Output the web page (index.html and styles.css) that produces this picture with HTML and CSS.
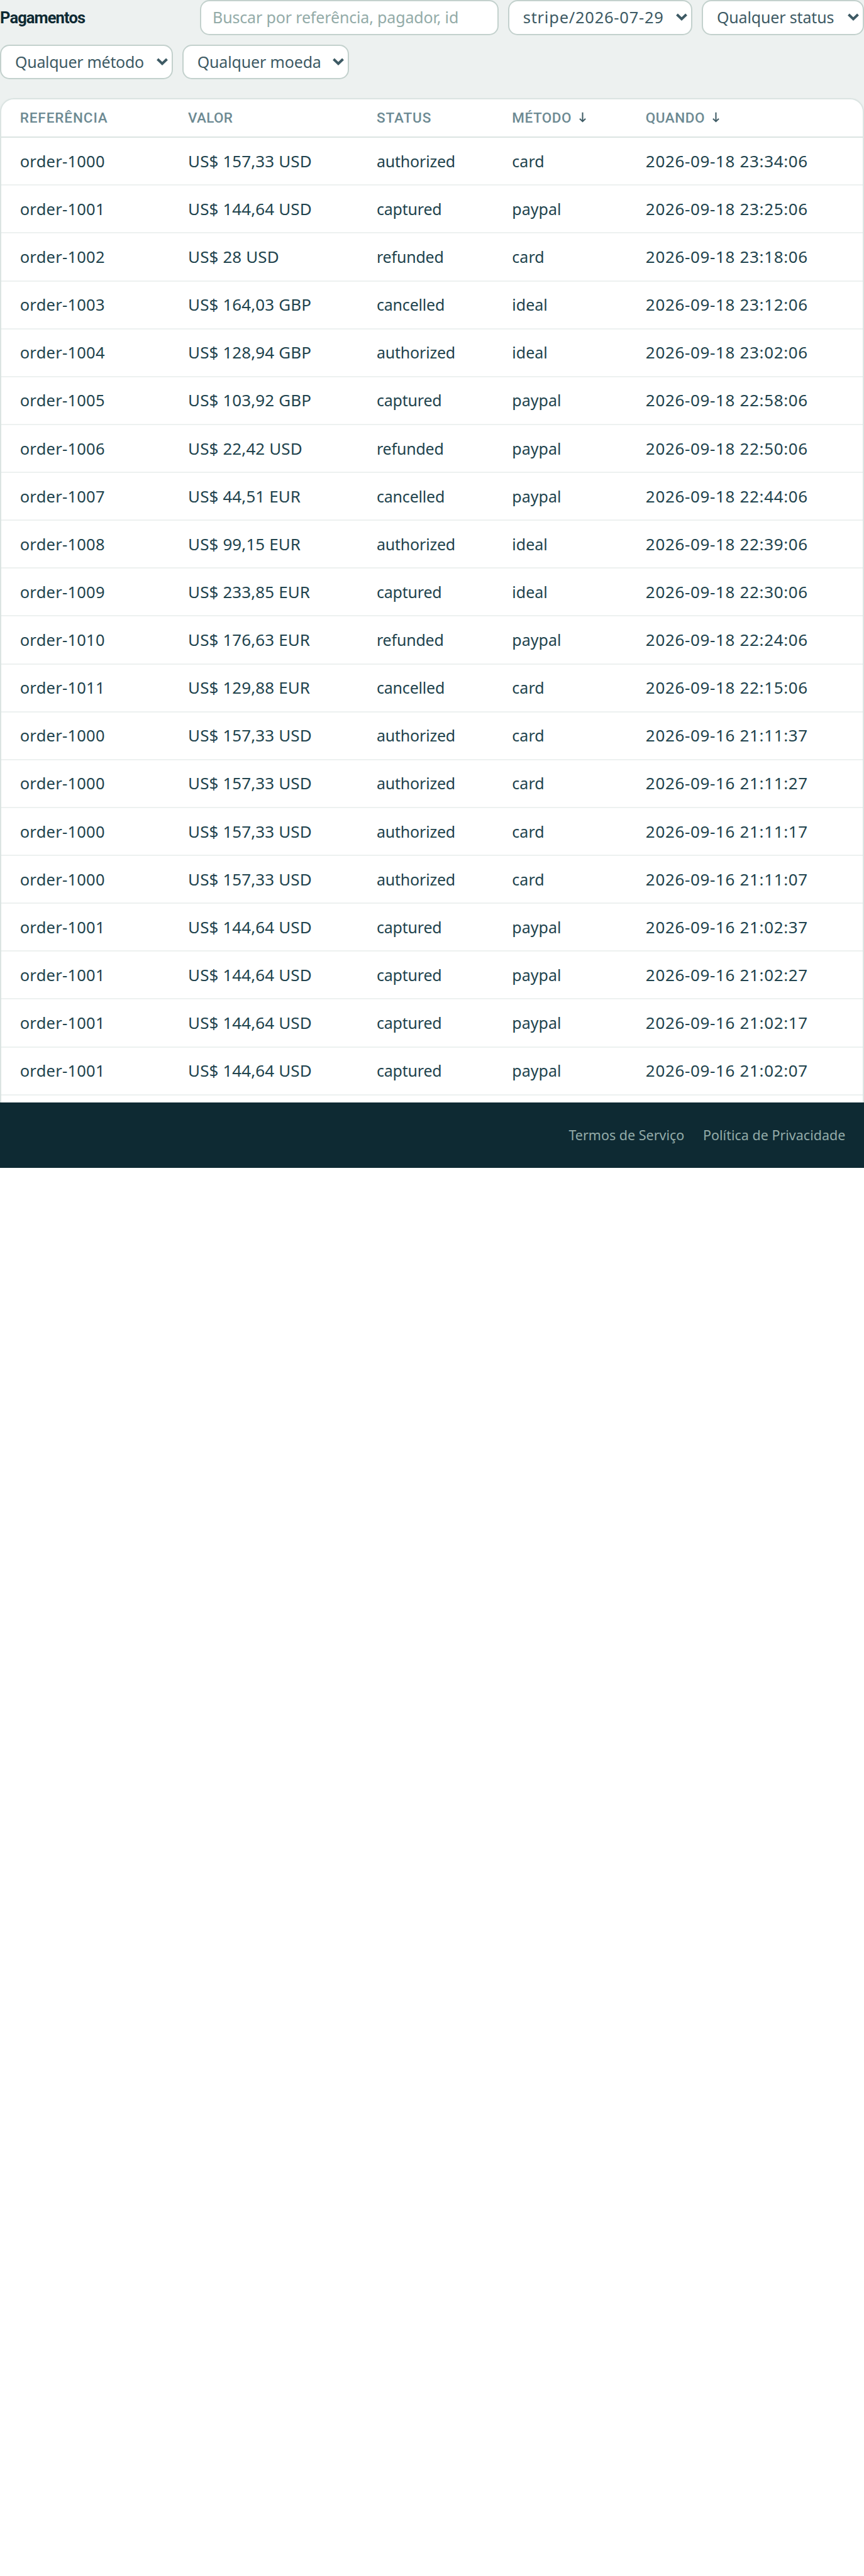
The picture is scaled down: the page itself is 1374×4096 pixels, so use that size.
FILE: index.html
```html
<!DOCTYPE html>
<html lang="pt-BR">
<head>
  <meta charset="UTF-8" />
  <meta name="viewport" content="width=device-width, initial-scale=1.0"/>
  <title>Pagamentos</title>
  <link rel="stylesheet" href="styles.css">
</head>
<body>

<main class="page">
  <div class="toolbar">
    <h1 class="title"><span>Pagamentos</span></h1>
    <div class="field search"><span>Buscar por referência, pagador, id</span></div>
    <div class="field select s-provider"><span>stripe/2026-07-29</span><svg class="chevron" viewBox="0 0 18 12"><path d="M1.5 2 9 9.2 16.500 2"/></svg></div>
    <div class="field select s-status"><span>Qualquer status</span><svg class="chevron" viewBox="0 0 18 12"><path d="M1.5 2 9 9.2 16.500 2"/></svg></div>
    <div class="field select s-method"><span>Qualquer método</span><svg class="chevron" viewBox="0 0 18 12"><path d="M1.5 2 9 9.2 16.500 2"/></svg></div>
    <div class="field select s-currency"><span>Qualquer moeda</span><svg class="chevron" viewBox="0 0 18 12"><path d="M1.5 2 9 9.2 16.500 2"/></svg></div>
  </div>

  <div class="card">
    <div class="row head">
      <div class="h-ref">Referência</div>
      <div class="h-val">Valor</div>
      <div class="h-sta">Status</div>
      <div class="h-met">Método<svg class="sort" viewBox="0 0 12 18"><path d="M6 0.500V16M1 11.500 6 16.300 11 11.500"/></svg></div>
      <div class="h-when">Quando<svg class="sort" viewBox="0 0 12 18"><path d="M6 0.500V16M1 11.500 6 16.300 11 11.500"/></svg></div>
    </div>
    <div class="row"><div class="ref">order-1000</div><div class="val">US$ 157,33 USD</div><div class="sta">authorized</div><div>card</div><div class="when">2026-09-18 23:34:06</div></div>
    <div class="row"><div class="ref">order-1001</div><div class="val">US$ 144,64 USD</div><div class="sta">captured</div><div>paypal</div><div class="when">2026-09-18 23:25:06</div></div>
    <div class="row"><div class="ref">order-1002</div><div class="val">US$ 28 USD</div><div class="sta">refunded</div><div>card</div><div class="when">2026-09-18 23:18:06</div></div>
    <div class="row"><div class="ref">order-1003</div><div class="val">US$ 164,03 GBP</div><div class="sta">cancelled</div><div>ideal</div><div class="when">2026-09-18 23:12:06</div></div>
    <div class="row"><div class="ref">order-1004</div><div class="val">US$ 128,94 GBP</div><div class="sta">authorized</div><div>ideal</div><div class="when">2026-09-18 23:02:06</div></div>
    <div class="row"><div class="ref">order-1005</div><div class="val">US$ 103,92 GBP</div><div class="sta">captured</div><div>paypal</div><div class="when">2026-09-18 22:58:06</div></div>
    <div class="row"><div class="ref">order-1006</div><div class="val">US$ 22,42 USD</div><div class="sta">refunded</div><div>paypal</div><div class="when">2026-09-18 22:50:06</div></div>
    <div class="row"><div class="ref">order-1007</div><div class="val">US$ 44,51 EUR</div><div class="sta">cancelled</div><div>paypal</div><div class="when">2026-09-18 22:44:06</div></div>
    <div class="row"><div class="ref">order-1008</div><div class="val">US$ 99,15 EUR</div><div class="sta">authorized</div><div>ideal</div><div class="when">2026-09-18 22:39:06</div></div>
    <div class="row"><div class="ref">order-1009</div><div class="val">US$ 233,85 EUR</div><div class="sta">captured</div><div>ideal</div><div class="when">2026-09-18 22:30:06</div></div>
    <div class="row"><div class="ref">order-1010</div><div class="val">US$ 176,63 EUR</div><div class="sta">refunded</div><div>paypal</div><div class="when">2026-09-18 22:24:06</div></div>
    <div class="row"><div class="ref">order-1011</div><div class="val">US$ 129,88 EUR</div><div class="sta">cancelled</div><div>card</div><div class="when">2026-09-18 22:15:06</div></div>
    <div class="row"><div class="ref">order-1000</div><div class="val">US$ 157,33 USD</div><div class="sta">authorized</div><div>card</div><div class="when">2026-09-16 21:11:37</div></div>
    <div class="row"><div class="ref">order-1000</div><div class="val">US$ 157,33 USD</div><div class="sta">authorized</div><div>card</div><div class="when">2026-09-16 21:11:27</div></div>
    <div class="row"><div class="ref">order-1000</div><div class="val">US$ 157,33 USD</div><div class="sta">authorized</div><div>card</div><div class="when">2026-09-16 21:11:17</div></div>
    <div class="row"><div class="ref">order-1000</div><div class="val">US$ 157,33 USD</div><div class="sta">authorized</div><div>card</div><div class="when">2026-09-16 21:11:07</div></div>
    <div class="row"><div class="ref">order-1001</div><div class="val">US$ 144,64 USD</div><div class="sta">captured</div><div>paypal</div><div class="when">2026-09-16 21:02:37</div></div>
    <div class="row"><div class="ref">order-1001</div><div class="val">US$ 144,64 USD</div><div class="sta">captured</div><div>paypal</div><div class="when">2026-09-16 21:02:27</div></div>
    <div class="row"><div class="ref">order-1001</div><div class="val">US$ 144,64 USD</div><div class="sta">captured</div><div>paypal</div><div class="when">2026-09-16 21:02:17</div></div>
    <div class="row"><div class="ref">order-1001</div><div class="val">US$ 144,64 USD</div><div class="sta">captured</div><div>paypal</div><div class="when">2026-09-16 21:02:07</div></div>
  </div>
</main>

<footer class="footer">
  <a class="terms">Termos de Serviço</a>
  <a class="privacy">Política de Privacidade</a>
</footer>

</body>
</html>
```
FILE: styles.css
```css
* {
  box-sizing: border-box;
}
body {
  margin: 0;
  background: #fff;
  font-family: "Noto Sans", sans-serif;
  font-size: 25px;
  color: #21434d;
}
.page {
  height: 1752.8px;
  overflow: hidden;
  background: #edf1f0;
}
.toolbar {
  display: flex;
  flex-wrap: wrap;
  gap: 14.85px;
  margin-bottom: 29.7px;
}
.title {
  width: 302.7px;
  height: 55.7px;
  margin: 0;
  font-family: Roboto, sans-serif;
  font-size: 25.5px;
  font-weight: 700;
  line-height: 56.5px;
  letter-spacing: -0.9px;
  color: #0e2a33;
}
.field {
  display: flex;
  align-items: center;
  height: 55.7px;
  padding-bottom: 2px;
  border: 2px solid #c3d1cd;
  border-radius: 15px;
  background: #fff;
  letter-spacing: -0.15px;
  white-space: nowrap;
}
.search {
  width: 475.3px;
  padding-left: 18.5px;
  color: #93aba8;
}
.select {
  justify-content: space-between;
  padding: 0 6px 1px 22px;
  color: #3d5a64;
}
.s-provider { width: 293.4px; font-size: 25.5px; letter-spacing: 0.75px; }
.s-status { width: 258px; }
.s-method { width: 274.8px; letter-spacing: -0.3px; }
.s-currency { width: 265.5px; }
.chevron {
  width: 18px;
  height: 12px;
  fill: none;
  stroke: #3d5a64;
  stroke-width: 4;
}
.card {
  height: 1700px;
  border: 2px solid #dbe4e2;
  border-radius: 22px;
  background: #fff;
  box-shadow: 0 2px 5px rgba(14,42,51,0.06);
}
.row {
  display: grid;
  grid-template-columns: 267.4px 299.9px 215.4px 212.5px 1fr;
  align-items: center;
  height: 76.128px;
  border-bottom: 2px solid #edf1f0;
  white-space: nowrap;
}
.row > div {
  padding-left: 29.7px;
  padding-bottom: 1px;
}
.ref { font-size: 25.5px; letter-spacing: 0.25px; }
.val { font-size: 26px; letter-spacing: 0.1px; }
.sta { letter-spacing: -0.2px; }
.when { font-size: 26px; letter-spacing: 0.65px; }
.head {
  height: 61.3px;
  border-bottom-color: #dbe4e2;
  font-family: Roboto, sans-serif;
  font-size: 22.5px;
  font-weight: 500;
  letter-spacing: 0.9px;
  text-transform: uppercase;
  color: #6d8a93;
}
.h-val { letter-spacing: 0.3px; }
.h-met, .h-when { letter-spacing: 0.5px; }
.sort {
  width: 11px;
  height: 17px;
  margin-left: 12px;
  fill: none;
  stroke: #3d5a64;
  stroke-width: 2.2;
}
.footer {
  display: flex;
  align-items: center;
  justify-content: flex-end;
  gap: 29.7px;
  height: 104px;
  padding-right: 29.7px;
  background: #0e2a33;
  font-size: 21.5px;
  color: #93aba8;
}
```
